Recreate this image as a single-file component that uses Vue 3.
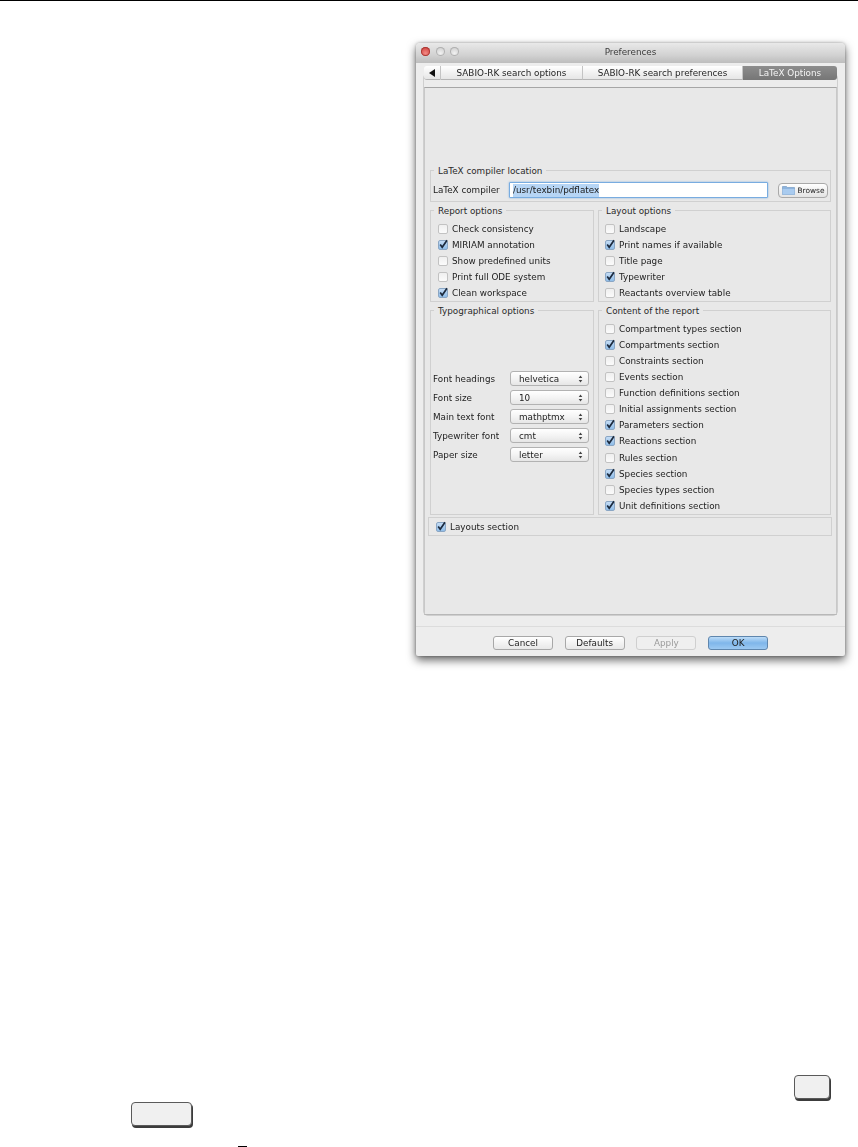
<script setup>
const reportOptions = [
  { label: 'Check consistency', on: false },
  { label: 'MIRIAM annotation', on: true },
  { label: 'Show predefined units', on: false },
  { label: 'Print full ODE system', on: false },
  { label: 'Clean workspace', on: true },
]
const layoutOptions = [
  { label: 'Landscape', on: false },
  { label: 'Print names if available', on: true },
  { label: 'Title page', on: false },
  { label: 'Typewriter', on: true },
  { label: 'Reactants overview table', on: false },
]
const contentOptions = [
  { label: 'Compartment types section', on: false },
  { label: 'Compartments section', on: true },
  { label: 'Constraints section', on: false },
  { label: 'Events section', on: false },
  { label: 'Function definitions section', on: false },
  { label: 'Initial assignments section', on: false },
  { label: 'Parameters section', on: true },
  { label: 'Reactions section', on: true },
  { label: 'Rules section', on: false },
  { label: 'Species section', on: true },
  { label: 'Species types section', on: false },
  { label: 'Unit definitions section', on: true },
]
const selects = [
  { label: 'Font headings', value: 'helvetica' },
  { label: 'Font size', value: '10' },
  { label: 'Main text font', value: 'mathptmx' },
  { label: 'Typewriter font', value: 'cmt' },
  { label: 'Paper size', value: 'letter' },
]
</script>

<template>
  <div class="page">
    <div class="rule"></div>

    <div class="window">
      <div class="titlebar">
        <div class="lights">
          <span class="light red"></span>
          <span class="light"></span>
          <span class="light"></span>
        </div>
        <span class="title">Preferences</span>
      </div>

      <div class="body">
        <div class="tabs">
          <div class="tab arrow"><svg width="7" height="8" viewBox="0 0 7 8"><path d="M6 0v8L0 4z" fill="#111" /></svg></div>
          <div class="tab t1">SABIO-RK search options</div>
          <div class="tab t2">SABIO-RK search preferences</div>
          <div class="tab t3">LaTeX Options</div>
        </div>

        <div class="frame">
          <div class="pane">
            <section class="group compiler">
              <div class="legend">LaTeX compiler location</div>
              <div class="compiler-row">
                <span class="compiler-label">LaTeX compiler</span>
                <div class="field"><span class="selected">/usr/texbin/pdflatex</span></div>
                <div class="browse">
                  <svg width="13" height="10" viewBox="0 0 13 10">
                    <path d="M0.5 1.5h4l1 1h7v7h-12z" fill="#8db4de" stroke="#6c93bf" stroke-width=".6" />
                    <path d="M0.5 4h12v5.5h-12z" fill="#a9cbef" />
                  </svg>
                  <span>Browse</span>
                </div>
              </div>
            </section>

            <div class="columns">
              <section class="group short">
                <div class="legend">Report options</div>
                <label v-for="o in reportOptions" :key="o.label" class="check">
                  <span class="box" :class="{ on: o.on }">
                    <svg v-if="o.on" width="11" height="11" viewBox="0 0 11 11"><path d="M2.2 5.6l2 2.6L9 1.2" fill="none" stroke="#1c2a3d" stroke-width="1.7" /></svg>
                  </span>
                  <span>{{ o.label }}</span>
                </label>
              </section>
              <section class="group short right">
                <div class="legend">Layout options</div>
                <label v-for="o in layoutOptions" :key="o.label" class="check">
                  <span class="box" :class="{ on: o.on }">
                    <svg v-if="o.on" width="11" height="11" viewBox="0 0 11 11"><path d="M2.2 5.6l2 2.6L9 1.2" fill="none" stroke="#1c2a3d" stroke-width="1.7" /></svg>
                  </span>
                  <span>{{ o.label }}</span>
                </label>
              </section>
              <section class="group tall typo">
                <div class="legend">Typographical options</div>
                <div v-for="s in selects" :key="s.label" class="select-row">
                  <span class="select-label">{{ s.label }}</span>
                  <div class="select">
                    <span>{{ s.value }}</span>
                    <svg width="5" height="8" viewBox="0 0 5 8"><path d="M2.5 0.5L4.3 3H0.7zM2.5 7.5L0.7 5H4.3z" fill="#444" /></svg>
                  </div>
                </div>
              </section>
              <section class="group tall right">
                <div class="legend">Content of the report</div>
                <label v-for="o in contentOptions" :key="o.label" class="check">
                  <span class="box" :class="{ on: o.on }">
                    <svg v-if="o.on" width="11" height="11" viewBox="0 0 11 11"><path d="M2.2 5.6l2 2.6L9 1.2" fill="none" stroke="#1c2a3d" stroke-width="1.7" /></svg>
                  </span>
                  <span>{{ o.label }}</span>
                </label>
              </section>
            </div>

            <div class="layouts">
              <span class="box on">
                <svg width="11" height="11" viewBox="0 0 11 11"><path d="M2.2 5.6l2 2.6L9 1.2" fill="none" stroke="#1c2a3d" stroke-width="1.7" /></svg>
              </span>
              <span class="layouts-label">Layouts section</span>
            </div>
          </div>
        </div>

        <div class="footer">
          <div class="btn">Cancel</div>
          <div class="btn">Defaults</div>
          <div class="btn disabled">Apply</div>
          <div class="btn primary">OK</div>
        </div>
      </div>
    </div>

    <div class="key key-small"></div>
    <div class="key key-wide"></div>
    <div class="mark"></div>
  </div>
</template>

<style scoped>
.page {
  width: 858px;
  height: 1147px;
  background: #fff;
  overflow: hidden;
  font-family: "DejaVu Sans", sans-serif;
  font-size: 8.8px;
  color: #222;
}
.rule { height: 1px; background: #000; }

.window {
  box-sizing: border-box;
  width: 429px;
  height: 613px;
  margin: 42px 0 0 416px;
  background: #ededed;
  border-radius: 4px 4px 2px 2px;
  box-shadow: 0 4px 10px rgba(0, 0, 0, .62), 0 0 3px rgba(0, 0, 0, .3);
  filter: blur(.35px);
}
.titlebar {
  position: relative;
  box-sizing: border-box;
  height: 20px;
  padding-bottom: 2px;
  display: flex;
  align-items: center;
  justify-content: center;
  background: linear-gradient(#e9e9e9, #d2d2d2 60%, #bdbdbd);
  border-radius: 4px 4px 0 0;
  color: #3c3c3c;
}
.lights {
  position: absolute;
  left: 5px;
  top: 4px;
  display: flex;
  gap: 5.5px;
}
.light {
  width: 9px;
  height: 9px;
  border-radius: 50%;
  background: radial-gradient(circle at 50% 70%, #f2f2f2, #c5c5c5);
  box-shadow: inset 0 0 0 1px #b0b0b0;
}
.light.red {
  background: radial-gradient(circle at 50% 70%, #f48a85, #c8332f);
  box-shadow: inset 0 0 0 1px #a93a36;
}
.body { padding: 3px 7px 0; }
.tabs {
  position: relative;
  z-index: 1;
  height: 14px;
  margin: 0 1px -7px;
  display: flex;
}
.tab {
  box-sizing: border-box;
  display: flex;
  align-items: center;
  justify-content: center;
  background: linear-gradient(#fff, #f2f2f2 50%, #e6e6e6);
  border-right: 1px solid #c4c4c4;
  border-bottom: 1px solid #b5b5b5;
  color: #1f1f1f;
}
.arrow { width: 17px; border-radius: 3px 0 0 3px; }
.t1 { width: 142px; }
.t2 { width: 160px; }
.t3 {
  flex: 1;
  background: linear-gradient(#8d8d8d, #767676);
  color: #f3f3f3;
  border: 0;
  border-radius: 0 3px 3px 0;
}
.frame {
  box-sizing: border-box;
  height: 543px;
  padding-top: 13px;
  border: 1px solid #cfcfcf;
  border-radius: 5px;
  background: #ececec;
}
.pane {
  height: 528px;
  box-sizing: border-box;
  padding: 82px 5px 0;
  border-top: 1px solid #a6a6a6;
  border-left: 1px solid #c8c8c8;
  border-right: 1px solid #c8c8c8;
  border-bottom: 1px solid #b8b8b8;
  background: #e8e8e8;
}
.group {
  box-sizing: border-box;
  border: 1px solid #d0d0d0;
  position: relative;
}
.legend {
  position: absolute;
  top: -5px;
  left: 3px;
  padding: 0 4px;
  line-height: 11px;
  background: #e8e8e8;
  color: #2a2a2a;
}
.compiler { height: 32px; padding: 11px 2px 0; }
.compiler-row { display: flex; align-items: center; height: 16px; }
.compiler-label { width: 76px; flex: none; }
.field {
  box-sizing: border-box;
  width: 259px;
  height: 16px;
  padding-left: 3px;
  display: flex;
  align-items: center;
  background: #fff;
  border: 1px solid #78ace0;
  box-shadow: 0 0 2px #78ace0;
  border-radius: 1px;
}
.selected { background: #b6d5f5; color: #202020; line-height: 13px; }
.browse {
  box-sizing: border-box;
  width: 50px;
  height: 15px;
  margin-left: 10px;
  display: flex;
  align-items: center;
  justify-content: center;
  gap: 3px;
  font-size: 7.4px;
  background: linear-gradient(#fff, #f0f0f0 50%, #e4e4e4);
  border: 1px solid #a9a9a9;
  border-radius: 4px;
}
.columns {
  display: grid;
  grid-template-columns: 164px 233px;
  gap: 8px 4px;
  margin-top: 8px;
}
.short { height: 92px; padding: 9.5px 0 0 7px; }
.tall { height: 205px; padding: 9.5px 0 0 7px; }
.right { padding-left: 6px; }
.check {
  display: flex;
  align-items: center;
  height: 16.13px;
  gap: 4px;
}
.box {
  box-sizing: border-box;
  position: relative;
  flex: none;
  width: 10px;
  height: 10px;
  background: linear-gradient(#efefef, #fbfbfb);
  border: 1px solid #c2c2c2;
  border-radius: 2px;
}
.box.on {
  background: linear-gradient(#c4dcf5, #8fbde9);
  border-color: #8aa6c4;
}
.box svg {
  position: absolute;
  left: -1px;
  top: -2px;
}
.typo { padding: 60px 4px 0 2px; }
.select-row {
  display: flex;
  align-items: center;
  height: 15px;
  margin-bottom: 4px;
}
.select-label { width: 77px; flex: none; }
.select {
  box-sizing: border-box;
  flex: 1;
  height: 15px;
  padding: 0 5px 0 8px;
  display: flex;
  align-items: center;
  justify-content: space-between;
  background: linear-gradient(#fff, #f4f4f4 50%, #e6e6e6);
  border: 1px solid #b2b2b2;
  border-radius: 3px;
}
.layouts {
  box-sizing: border-box;
  display: flex;
  align-items: center;
  gap: 4px;
  height: 19px;
  margin: 2px -1px 0 -2px;
  padding-left: 7px;
  border: 1px solid #d0d0d0;
}
.layouts-label { padding-top: 1px; }
.footer {
  display: flex;
  gap: 11.7px;
  justify-content: flex-start;
  height: 30px;
  margin: 10px -7px 0;
  padding: 9px 0 0 77px;
  border-top: 1px solid #dcdcdc;
}
.btn {
  box-sizing: border-box;
  width: 60px;
  height: 14px;
  display: flex;
  align-items: center;
  justify-content: center;
  background: linear-gradient(#fff, #f3f3f3 50%, #e8e8e8);
  border: 1px solid #a8a8a8;
  border-radius: 3px;
  color: #1d1d1d;
}
.btn.disabled {
  background: #efefef;
  border-color: #cfcfcf;
  color: #9a9a9a;
}
.btn.primary {
  background: linear-gradient(#bcdcf8, #7fb6ea 50%, #9cc9f2);
  border-color: #5f86ad;
}

.key {
  box-sizing: border-box;
  height: 24px;
  background: #f0f0f0;
  border: 1px solid #5a5a5a;
  border-radius: 4px;
  box-shadow: 1px 2px 0 #3c3c3c;
}
.key-small { width: 36px; margin: 419px 0 0 794px; }
.key-wide { width: 61px; margin: 3px 0 0 131px; }
.mark { width: 9px; height: 1px; margin: 20px 0 0 238px; background: #000; }
</style>
